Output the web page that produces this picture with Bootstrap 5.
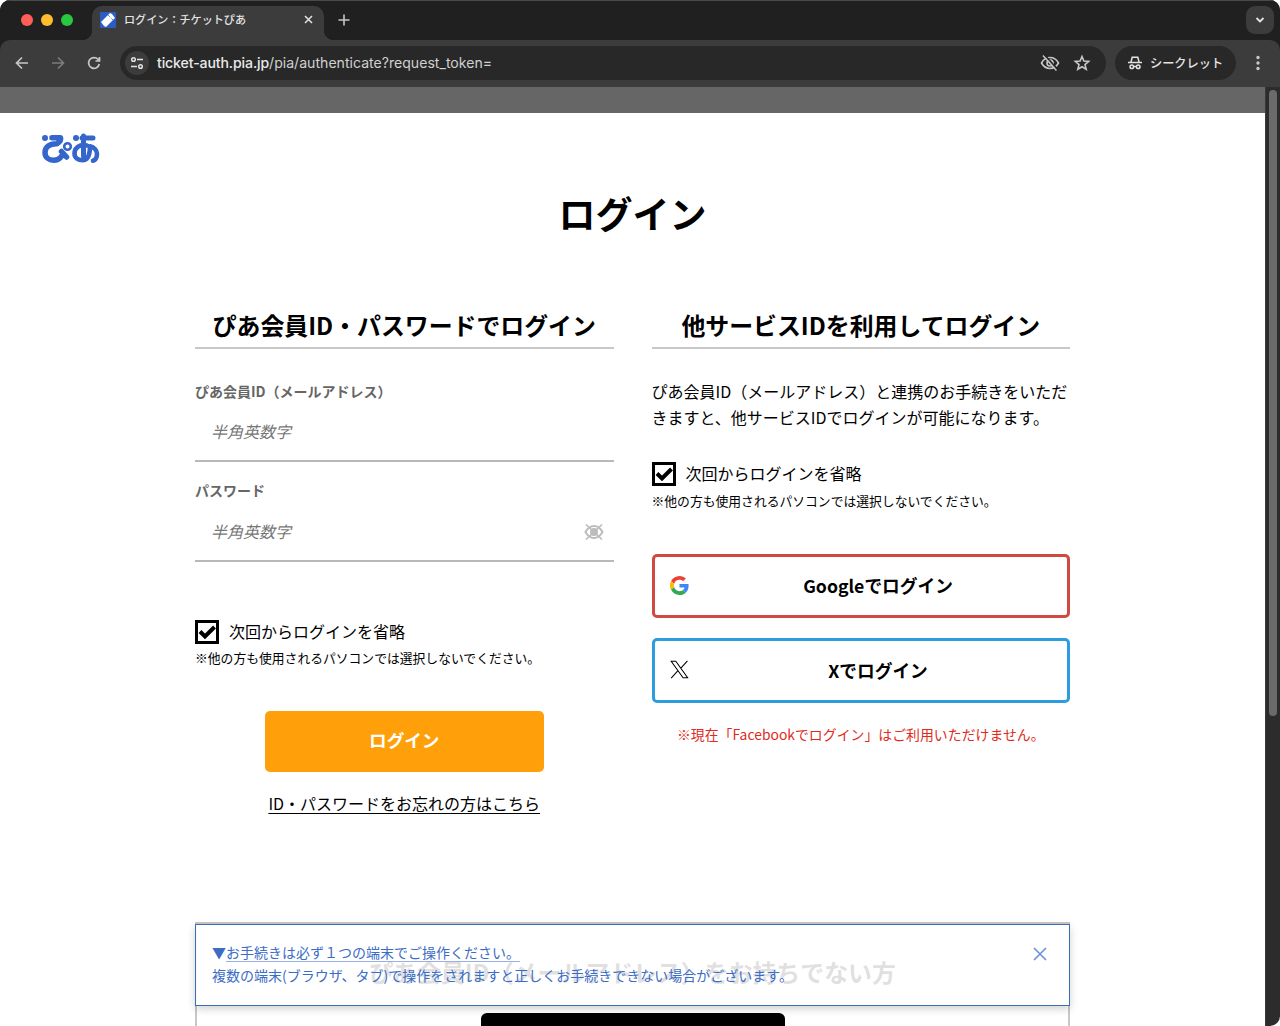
<!DOCTYPE html>
<html lang="ja">
<head>
<meta charset="utf-8">
<meta name="viewport" content="width=device-width, initial-scale=1">
<title>ログイン：チケットぴあ</title>
<link href="https://cdn.jsdelivr.net/npm/bootstrap@5.3.0/dist/css/bootstrap.min.css" rel="stylesheet">
<style>
html,body{height:100%;overflow:hidden}
body{background:#fff;color:#000;font-family:"Noto Sans CJK JP",sans-serif;font-size:16px;line-height:1.6}
svg{display:block;flex:none}
.win{height:1026px;width:1280px;overflow:hidden;border-radius:10px;background:linear-gradient(#202020 60px,#fff 61px)}
.tabstrip{height:40px;background:#202020;border-top:1px solid #4a4a4a;padding-left:21px;padding-right:6px}
.lights{gap:8px;margin-right:19px;margin-bottom:1px}
.lights i{width:12px;height:12px;border-radius:50%}
.tabx{position:relative;width:232px;height:34px;margin-top:5px;background:#3c3c3c;border-radius:10px 10px 0 0;padding:0 10px 7px 8px;color:#e3e3e3;font-size:11.1px;font-weight:500}
.tabx::before,.tabx::after{content:"";position:absolute;bottom:0;width:10px;height:10px}
.tabx::before{left:-10px;background:radial-gradient(circle at 0 0,transparent 10px,#3c3c3c 10.5px)}
.tabx::after{right:-10px;background:radial-gradient(circle at 100% 0,transparent 10px,#3c3c3c 10.5px)}
.plus{margin-left:14px;margin-bottom:2px}
.tabmenu{width:28px;height:28px;border-radius:9px;background:#3c3c3c;margin-bottom:2px}
.toolbar{height:47px;background:#3c3c3c;border-radius:10px 10px 0 0;padding:0 15px 1px 14px;color:#c7c7c7}
.nav-icons{width:88px}
.omni{height:34px;border-radius:17px;background:#282828;width:986px;margin-left:18px;padding:0 15px 0 5px}
.site{width:24px;height:24px;border-radius:50%;background:#3c3c3c;margin-right:8px}
.url{font-family:Inter,sans-serif;font-size:14.1px;font-weight:400;color:#d0d0d0;white-space:nowrap}
.url b{font-weight:500;color:#e8e8e8;letter-spacing:-.12px}
.incog{height:34px;width:121px;border-radius:17px;background:#282828;margin-left:9px;padding-left:12px;color:#e3e3e3;font-size:12.2px;font-weight:500}
.incog span{margin-left:7px;padding-top:1px}
.view{height:939px}
.page-x{width:1265px;background:#fff;overflow:hidden;position:relative;border-bottom-left-radius:10px}
.strip{height:26px;background:#666}
.scroll-x{width:15px;background:#2c2c2c;border-left:1px solid #3a3a3a;padding:3px 3px 0 3px}
.scroll-x div{height:626px;width:8px;border-radius:4px;background:#6b6b6b}
.logo{height:64px;padding:20px 0 0 41px}
.hero{font-size:37px;font-weight:700;line-height:73px;height:76px;text-align:center;margin:0}
.cols{width:875px;margin-left:195px;gap:38px;padding-top:51px;height:669px}
.cols section{width:418.5px}
h2{font-size:23.900px;font-weight:700;line-height:42px;text-align:center;border-bottom:2px solid #c8c8c8;margin:0;height:45px;white-space:nowrap}
.lbl{font-size:14px;font-weight:700;color:#666;line-height:20px;display:block}
.field{height:60px;border-bottom:2px solid #b8b8b8;padding:10px 10px 8px 16px}
.field input{border:0;outline:0;background:transparent;width:200px;padding:0;font-size:16px;font-style:italic}
.field input::placeholder{color:#777;opacity:1}
.chk{gap:10px;height:24px;line-height:23px}
.note{font-size:12.8px;line-height:20px;margin:5px 0 0;white-space:nowrap}
.login{width:279px;height:61px;background:#ff9f0a;color:#fff;font-size:17.6px;font-weight:700;border:0;border-radius:5px;display:block;margin:43px auto 0;padding-bottom:3px}
.forgot{color:#000;text-align:center;display:block;margin-top:19px;white-space:nowrap;text-underline-offset:3px}
.sns{height:64px;border:3px solid #d04a40;border-radius:5px;display:flex;align-items:center;background:#fff;color:#000;font-size:17.7px;font-weight:700;width:418px;padding:0 16px 2px 15px}
.sns span{flex:1;text-align:center;margin-left:17px}
.sns.x{border-color:#2d9de0}
.red{color:#e02a20;font-size:13.9px;line-height:22px;text-align:center;margin:20px 0 0;white-space:nowrap}
.join{width:875px;height:140px;margin-left:195px;border:2px solid #c8c8c8;padding-top:32px}
.join h2{border:0;line-height:32px}
.join button{display:block;width:304px;height:60px;background:#000;border:0;border-radius:6px;margin:12px auto 0}
.notice{position:absolute;left:195px;top:837px;width:875px;height:82px;border:1px solid #3c70b4;background:rgba(255,255,255,.88);box-shadow:0 3px 8px rgba(0,0,0,.18);padding:16px 22px 0 16px;font-size:14px;line-height:23.4px;color:#3b6cc6;white-space:nowrap}
.notice u{text-underline-offset:3px;text-decoration-color:#9aafe8}
.notice svg{margin-top:6px}
</style>
</head>
<body>
<div class="win d-flex flex-column">
 <div class="tabstrip d-flex align-items-center">
  <div class="lights d-flex"><i style="background:#ff5f57"></i><i style="background:#febc2e"></i><i style="background:#28c840"></i></div>
  <div class="tabx d-flex align-items-center">
   <svg width="16" height="16"><rect width="16" height="16" fill="#2b5cc4"/><path d="M1 10 10 1l2 1 3 4-9 9-2-1-3-4z" fill="#fff"/><path d="m8 3 5 5" stroke="#2b5cc4" stroke-width="1" stroke-dasharray="1 1"/></svg>
   <span class="ms-2">ログイン：チケットぴあ</span>
   <svg class="ms-auto" width="11" height="11" stroke="#e3e3e3" stroke-width="1.5"><path d="m2 2 7 7M9 2 2 9"/></svg>
  </div>
  <svg class="plus" width="12" height="12" stroke="#c7c7c7" stroke-width="1.6"><path d="M6 .5v11M.5 6h11"/></svg>
  <div class="tabmenu ms-auto d-flex align-items-center justify-content-center"><svg width="10" height="8" fill="none" stroke="#e3e3e3" stroke-width="1.8"><path d="m1.500 2 3.500 3.500L8.500 2"/></svg></div>
 </div>
 <div class="toolbar d-flex align-items-center">
  <div class="nav-icons d-flex justify-content-between">
   <svg width="16" height="16" fill="none" stroke="currentColor" stroke-width="1.7"><path d="M14 8H3M8 2.500 2.500 8 8 13.500"/></svg>
   <svg width="16" height="16" fill="none" stroke="#7c7c7c" stroke-width="1.7"><path d="M2 8h11M8 2.500 13.500 8 8 13.500"/></svg>
   <svg width="16" height="16" fill="none" stroke="currentColor" stroke-width="1.7"><path d="M13.300 9A5.400 5.400 0 1 1 12 4.300l1.200 1.300M13.500 2v4h-4"/></svg>
  </div>
  <div class="omni d-flex align-items-center">
   <div class="site d-flex align-items-center justify-content-center"><svg width="14" height="14" fill="none" stroke="#e3e3e3" stroke-width="1.500"><circle cx="3.500" cy="3.500" r="1.800"/><path d="M7 3.500h6M1 10.500h6"/><circle cx="10.500" cy="10.500" r="1.800"/></svg></div>
   <span class="url"><b>ticket-auth.pia.jp</b>/pia/authenticate?request_token=</span>
   <svg class="ms-auto" width="20" height="18" fill="none" stroke="currentColor" stroke-width="1.600"><path d="M1.500 9C4 4.500 7 3.500 10 3.500S16 4.500 18.500 9C16 13.500 13 14.500 10 14.500S4 13.500 1.500 9z"/><path d="M8 6.500a3.500 3.500 0 0 1 5 4z" fill="currentColor"/><circle cx="10" cy="9" r="3"/><path d="m3 1.500 13.500 15"/><path d="m4.300.5 13.500 15" stroke="#282828"/></svg>
   <svg style="margin-left:13px" width="18" height="18" fill="none" stroke="currentColor" stroke-width="1.600"><path d="m9 2.500 1.900 4.500 4.800.4-3.700 3.200 1.200 4.700L9 12.700l-4.200 2.600L6 10.600 2.300 7.400 7.100 7z"/></svg>
  </div>
  <div class="incog d-flex align-items-center"><svg width="16" height="16" fill="none" stroke="#e3e3e3" stroke-width="1.500"><path d="M1 7.500h14M4 7 5.200 2.200h5.600L12 7"/><circle cx="4.800" cy="11.800" r="1.800"/><circle cx="11.200" cy="11.800" r="1.800"/><path d="M6.500 11.500h3"/></svg><span>シークレット</span></div>
  <svg class="ms-auto" width="14" height="16" fill="#c7c7c7"><circle cx="7" cy="2.500" r="1.700"/><circle cx="7" cy="8" r="1.700"/><circle cx="7" cy="13.500" r="1.700"/></svg>
 </div>
 <div class="view d-flex">
  <main class="page-x">
   <div class="strip"></div>
   <div class="logo"><svg width="59" height="31" fill="none" stroke="#3466cb" stroke-width="5.500" stroke-linecap="round" stroke-linejoin="round"><circle cx="4" cy="5" r="3" fill="#3466cb" stroke="none"/><path d="M11 4.700h8.500q1 3-3.500 6C8 10.500 4 14.500 4 19.500c0 5 4 7.700 8.500 7.700 3.500 0 6-1 8-4M20.500 18.500l5 5.500"/><circle cx="26.500" cy="13.500" r="3.300" stroke-width="2.600"/><circle cx="35" cy="5" r="3" fill="#3466cb" stroke="none"/><path d="M41 5h11M42.500 3v20" stroke-width="5"/><path d="M46 12.500c-8-1.500-12.500 2.500-12.500 8 0 4.500 4 6.700 8 6.700 5 0 7.500-5 7.500-14 4 1 7 4 7 7.500s-1 6-4 7" stroke-width="4.600"/></svg></div>
   <h1 class="hero">ログイン</h1>
   <div class="cols d-flex">
    <section>
     <h2>ぴあ会員ID・パスワードでログイン</h2>
     <label class="lbl" style="margin-top:32px">ぴあ会員ID（メールアドレス）</label>
     <div class="field d-flex align-items-center" style="height:61px"><input placeholder="半角英数字"></div>
     <label class="lbl" style="margin-top:18px">パスワード</label>
     <div class="field d-flex align-items-center" style="height:62px;padding-bottom:7px"><input placeholder="半角英数字"><svg class="ms-auto" width="20" height="18" fill="none" stroke="#bcbcbc" stroke-width="2"><path d="M1.500 9C4 4.500 6 3 10 3s6 1.500 8.500 6C16 13.500 14 15 10 15S4 13.500 1.500 9z"/><circle cx="10" cy="9" r="3" fill="#bcbcbc"/><path d="m2 1.500 16 15M18 1.500 2 16.500" stroke-width="1.700"/></svg></div>
     <div class="chk d-flex" style="margin-top:58px"><svg width="24" height="24" fill="none" stroke="#000" stroke-width="3"><path d="M1.500 1.500h21v21h-21z"/><path d="m5 11.500 5 5 9.500-9.500" stroke-width="4"/></svg>次回からログインを省略</div>
     <p class="note" style="margin-top:4px">※他の方も使用されるパソコンでは選択しないでください。</p>
     <button class="login">ログイン</button>
     <a href="#" class="forgot">ID・パスワードをお忘れの方はこちら</a>
    </section>
    <section>
     <h2>他サービスIDを利用してログイン</h2>
     <p style="margin:30px 0 0;line-height:25.600px;white-space:nowrap">ぴあ会員ID（メールアドレス）と連携のお手続きをいただ<br>きますと、他サービスIDでログインが可能になります。</p>
     <div class="chk d-flex" style="margin-top:32px"><svg width="24" height="24" fill="none" stroke="#000" stroke-width="3"><path d="M1.500 1.500h21v21h-21z"/><path d="m5 11.500 5 5 9.500-9.500" stroke-width="4"/></svg>次回からログインを省略</div>
     <p class="note">※他の方も使用されるパソコンでは選択しないでください。</p>
     <button class="sns" style="margin-top:43px"><svg width="19" height="19" viewBox="0 0 48 48"><path fill="#EA4335" d="M24 9.500c3.500 0 6.700 1.200 9.200 3.600l6.900-6.900C35.900 2.400 30.500 0 24 0 14.600 0 6.500 5.400 2.600 13.200l8 6.200C12.400 13.700 17.700 9.500 24 9.500z"/><path fill="#4285F4" d="M47 24.600c0-1.600-.2-3.100-.4-4.600H24v9h12.900c-.6 3-2.200 5.500-4.700 7.200l7.700 6c4.500-4.200 7.100-10.400 7.100-17.600z"/><path fill="#FBBC05" d="M10.500 28.600a14 14 0 0 1 0-9.200l-8-6.200a24 24 0 0 0 0 21.600l8-6.200z"/><path fill="#34A853" d="M24 48c6.500 0 11.900-2.100 15.900-5.800l-7.700-6c-2.200 1.500-4.900 2.300-8.200 2.300-6.300 0-11.600-4.200-13.500-9.900l-8 6.200C6.500 42.600 14.600 48 24 48z"/></svg><span>Googleでログイン</span></button>
     <button class="sns x" style="margin-top:20px;height:65px"><svg width="19" height="19" viewBox="0 0 24 24" fill="none" stroke="#000" stroke-width="1.300"><path d="M1.500 1.500h5.800l15 21h-5.800zM22 1 13.200 11M1.500 23 10.300 13.200"/></svg><span>Xでログイン</span></button>
     <p class="red">※現在「Facebookでログイン」はご利用いただけません。</p>
    </section>
   </div>
   <div class="join"><h2>ぴあ会員ID（メールアドレス）をお持ちでない方</h2><button aria-label="新規会員登録"></button></div>
   <div class="notice d-flex justify-content-between"><div>▼<u>お手続きは必ず１つの端末でご操作ください。</u><br>複数の端末(ブラウザ、タブ)で操作をされますと正しくお手続きできない場合がございます。</div><svg width="14" height="14" stroke="#6f92d8" stroke-width="1.700"><path d="m1 1 12 12M13 1 1 13"/></svg></div>
  </main>
  <div class="scroll-x"><div></div></div>
 </div>
</div>
<script src="https://cdn.jsdelivr.net/npm/bootstrap@5.3.0/dist/js/bootstrap.bundle.min.js"></script>
</body>
</html>
